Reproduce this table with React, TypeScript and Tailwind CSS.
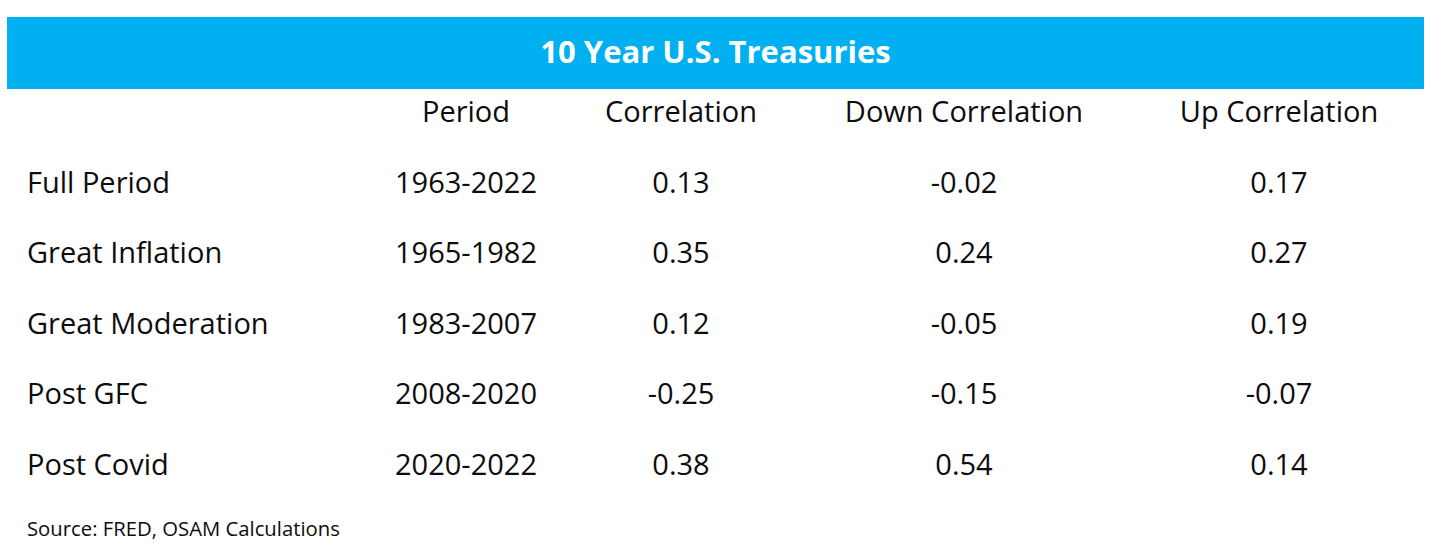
import React from "react";

const rows = [
  ["Full Period", "1963-2022", "0.13", "-0.02", "0.17"],
  ["Great Inflation", "1965-1982", "0.35", "0.24", "0.27"],
  ["Great Moderation", "1983-2007", "0.12", "-0.05", "0.19"],
  ["Post GFC", "2008-2020", "-0.25", "-0.15", "-0.07"],
  ["Post Covid", "2020-2022", "0.38", "0.54", "0.14"],
];

const grid = "grid grid-cols-[349px_180px_250px_316px_314px] pl-[27px]";

export default function App() {
  return (
    <div
      className="w-[1435px] h-[555px] bg-white text-[#0d0d0d] overflow-hidden pt-[17px]"
      style={{ fontFamily: "'Open Sans', Lato, sans-serif" }}
    >
      <div className="ml-[7px] w-[1417px] h-[72px] bg-[#00b0f0] flex items-center justify-center pb-[3px]">
        <span className="text-white font-bold text-[31px] leading-none">10 Year U.S. Treasuries</span>
      </div>
      <div className={`${grid} h-[42px] items-center text-[29px] leading-none`}>
        <div />
        <div className="text-center">Period</div>
        <div className="text-center">Correlation</div>
        <div className="text-center">Down Correlation</div>
        <div className="text-center">Up Correlation</div>
      </div>
      <div className="mt-[15px]">
        {rows.map((r) => (
          <div key={r[0]} className={`${grid} h-[70.5px] items-center text-[29px] leading-none`}>
            <div>{r[0]}</div>
            <div className="text-center">{r[1]}</div>
            <div className="text-center">{r[2]}</div>
            <div className="text-center">{r[3]}</div>
            <div className="text-center">{r[4]}</div>
          </div>
        ))}
      </div>
      <div className="pl-[27px] mt-[17px] text-[20.3px] leading-[24px]">Source: FRED, OSAM Calculations</div>
    </div>
  );
}
